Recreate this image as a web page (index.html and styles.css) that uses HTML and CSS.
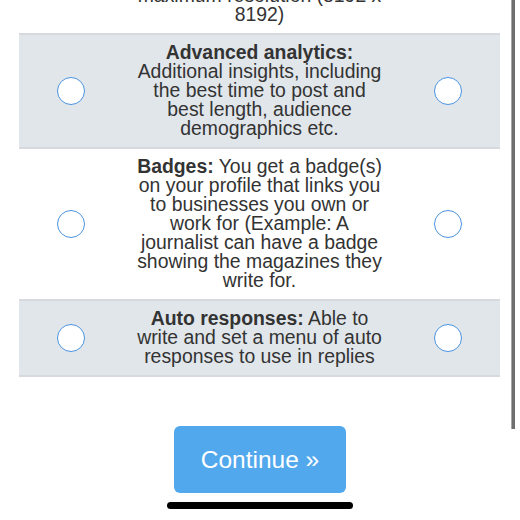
FILE: index.html
```html
<!DOCTYPE html>
<html lang="en">
<head>
<meta charset="utf-8">
<title>Features</title>
<link rel="stylesheet" href="styles.css">
</head>
<body>
<div class="screen">
  <div class="features">
    <div class="row intro">
      <span class="cell-empty"></span>
      <p class="desc">maximum resolution (8192 x 8192)</p>
      <span class="cell-empty"></span>
    </div>
    <div class="row shaded">
      <span class="radio"></span>
      <p class="desc"><b>Advanced analytics:</b> Additional insights, including the best time to post and best length, audience demographics etc.</p>
      <span class="radio"></span>
    </div>
    <div class="row">
      <span class="radio"></span>
      <p class="desc"><b>Badges:</b> You get a badge(s) on your profile that links you to businesses you own or work for (Example: A journalist can have a badge showing the magazines they write for.</p>
      <span class="radio"></span>
    </div>
    <div class="row shaded last">
      <span class="radio"></span>
      <p class="desc"><b>Auto responses:</b> Able to write and set a menu of auto responses to use in replies</p>
      <span class="radio"></span>
    </div>
  </div>
  <div class="actions">
    <button class="continue" type="button">Continue »</button>
  </div>
  <div class="home-indicator"></div>
</div>
<div class="scrollbar"></div>
</body>
</html>
```
FILE: styles.css
```css
html, body {
  margin: 0;
  padding: 0;
  background: #ffffff;
  height: 520px;
  overflow: hidden;
}

body {
  font-family: "Liberation Sans", Arial, Helvetica, sans-serif;
  color: #333333;
  position: relative;
}

.screen {
  width: 520px;
  display: flex;
  flex-direction: column;
  align-items: center;
}

.features {
  width: 481px;
  margin-top: -22px;
  margin-right: 1px;
}

.row {
  display: grid;
  grid-template-columns: 104px 1fr 104px;
  align-items: center;
  justify-items: center;
  padding: 8px 0 9px;
  border-top: 2px solid #d6dadf;
}

.row.intro {
  border-top: none;
}

.row.shaded {
  background: #e1e6eb;
}

.row.last {
  border-bottom: 2px solid #d6dadf;
}

.desc {
  margin: 0;
  width: 250px;
  text-align: center;
  font-size: 19.4px;
  line-height: 19px;
}

.desc b {
  font-weight: bold;
}

.radio {
  width: 26px;
  height: 26px;
  border: 1.5px solid #4a93e0;
  border-radius: 50%;
  background: #ffffff;
}

.actions {
  margin-top: 49px;
  display: flex;
  justify-content: center;
}

.continue {
  width: 172px;
  height: 67px;
  border: none;
  border-radius: 6px;
  background: #52a8ec;
  color: #ffffff;
  font-family: "Liberation Sans", Arial, Helvetica, sans-serif;
  font-size: 24.5px;
  padding: 0;
}

.home-indicator {
  margin-top: 9px;
  width: 186px;
  height: 7px;
  border-radius: 4px;
  background: #000000;
}

.scrollbar {
  position: absolute;
  top: 0;
  left: 511px;
  width: 4px;
  height: 429px;
  background: #6f6f6f;
  border-left: 1px solid #a8a8a8;
  box-sizing: border-box;
}
```
